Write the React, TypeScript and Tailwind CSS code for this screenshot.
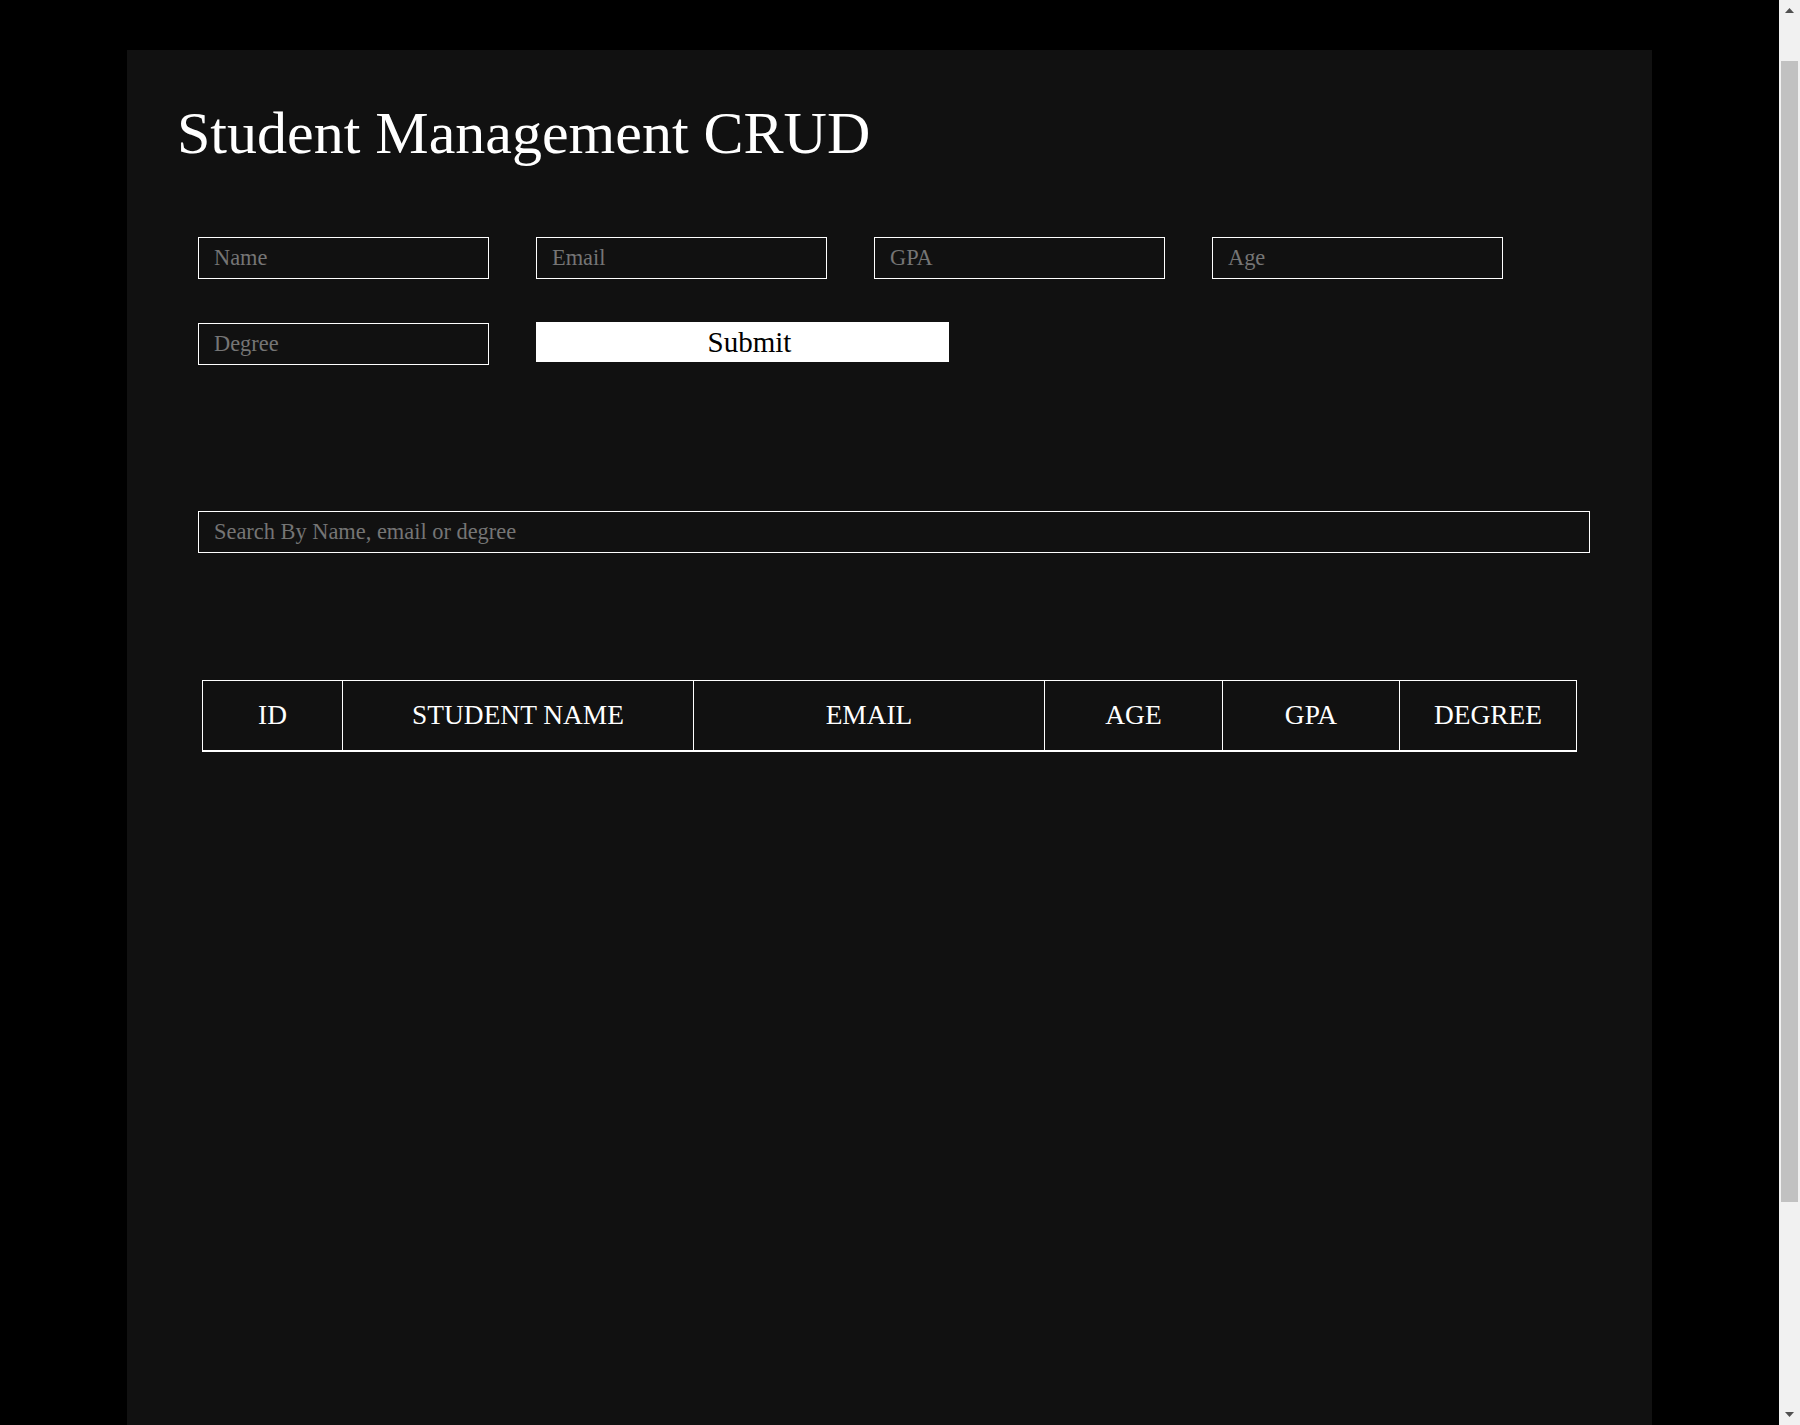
import { useState } from 'react';

const columns = [
  { label: 'ID', width: 'w-[140px]' },
  { label: 'STUDENT NAME', width: 'w-[351px]' },
  { label: 'EMAIL', width: 'w-[351px]' },
  { label: 'AGE', width: 'w-[178px]' },
  { label: 'GPA', width: 'w-[177px]' },
  { label: 'DEGREE', width: 'w-[177px]' },
];

const fields = ['Name', 'Email', 'GPA', 'Age', 'Degree'];

function FakeScrollbar() {
  return (
    <div className="w-[21px] h-full bg-[#f1f1f1] flex flex-col items-center shrink-0">
      <div className="h-[21px] w-full flex items-center justify-center">
        <svg width="9" height="5" viewBox="0 0 9 5">
          <path d="M4.5 0 L9 5 L0 5 Z" fill="#505050" />
        </svg>
      </div>
      <div className="mt-[40px] h-[1141px] w-[17px] bg-[#c1c1c1]" />
      <div className="flex-1" />
      <div className="h-[21px] w-full flex items-center justify-center">
        <svg width="9" height="5" viewBox="0 0 9 5">
          <path d="M0 0 L9 0 L4.5 5 Z" fill="#505050" />
        </svg>
      </div>
    </div>
  );
}

export default function App() {
  const [values, setValues] = useState<Record<string, string>>({});
  const [search, setSearch] = useState('');

  return (
    <div className="h-screen w-full flex overflow-hidden bg-black font-['Liberation_Serif','Times_New_Roman',serif]">
      <div className="flex-1 h-full overflow-hidden pt-[50px]">
        {/* Main panel */}
        <div className="w-[1525px] mx-auto min-h-[1700px] bg-[#111111] pl-[50px] pr-[48px] pt-[53px]">
          <h1 className="text-[60px] leading-[60px] text-white font-normal">Student Management CRUD</h1>

          {/* Form */}
          <form
            onSubmit={(e) => e.preventDefault()}
            className="mt-[74px] ml-[21px] w-[1305px] flex flex-wrap items-start gap-x-[47px] gap-y-[44px]"
          >
            {fields.map((f) => (
              <input
                key={f}
                placeholder={f}
                value={values[f] ?? ''}
                onChange={(e) => setValues({ ...values, [f]: e.target.value })}
                className="w-[291px] h-[42px] border border-white bg-transparent px-[15px] text-[22.4px] text-white placeholder:text-[#757575] outline-none"
              />
            ))}
            <button
              type="submit"
              className="w-[413px] h-[40px] -mt-px bg-white text-black text-[29px] leading-none pl-[14px]"
            >
              Submit
            </button>
          </form>

          {/* Search */}
          <div className="mt-[146px] ml-[21px]">
            <input
              placeholder="Search By Name, email or degree"
              value={search}
              onChange={(e) => setSearch(e.target.value)}
              className="w-[1392px] h-[42px] border border-white bg-transparent px-[15px] text-[22.4px] text-white placeholder:text-[#757575] outline-none"
            />
          </div>

          {/* Table */}
          <table className="mt-[127px] ml-[25px] border-collapse border border-white">
            <thead>
              <tr>
                {columns.map((c) => (
                  <th
                    key={c.label}
                    className={`${c.width} h-[70px] border border-white border-b-2 text-[27.4px] font-normal text-white text-center p-0`}
                  >
                    {c.label}
                  </th>
                ))}
              </tr>
            </thead>
            <tbody />
          </table>
        </div>
      </div>
      <FakeScrollbar />
    </div>
  );
}
